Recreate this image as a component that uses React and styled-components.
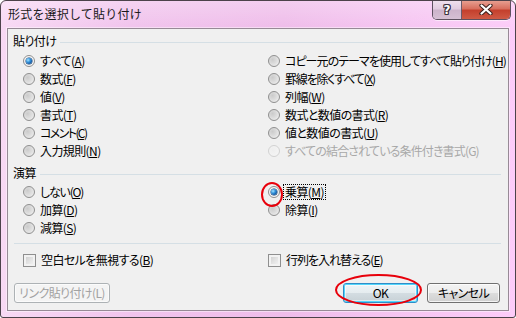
import React from "react";
import styled, { createGlobalStyle, css } from "styled-components";

const Global = createGlobalStyle`
  html, body { margin: 0; padding: 0; background: #ffffff; }
  body { font-family: "Noto Sans CJK JP", "Noto Sans", sans-serif; }
  #root { width: 516px; height: 318px; }
`;

const uiFont = css`
  font-family: "Noto Sans CJK JP", "Noto Sans", sans-serif;
  font-size: 12px;
  font-feature-settings: "palt" 1;
  font-kerning: normal;
  letter-spacing: -0.6px;
`;

const Window = styled.div`
  width: 516px;
  height: 318px;
  box-sizing: border-box;
  border: 1px solid #4c424a;
  border-radius: 6px 6px 3px 3px;
  background:
    linear-gradient(180deg, rgba(255, 255, 255, 0.25) 0px, rgba(255, 255, 255, 0) 26px),
    linear-gradient(90deg, #f8d9f4 0%, #f1c4ed 25%, #efbdea 55%, #f6c6f2 80%, #fcccf9 100%);
  display: flex;
  flex-direction: column;
  overflow: hidden;
`;

const TitleBar = styled.div`
  height: 27px;
  flex: none;
  display: flex;
  align-items: flex-start;
  justify-content: space-between;
  padding: 0 4px 0 7px;
`;

const Title = styled.div`
  font-family: "Noto Sans CJK JP", sans-serif;
  font-size: 12px;
  line-height: 16px;
  margin-top: 5px;
  color: #1a1a1a;
  letter-spacing: 0.2px;
`;

const Caption = styled.div`
  display: flex;
  margin-top: -1px;
  border: 1px solid #5e5160;
  border-top: none;
  border-radius: 0 0 5px 5px;
  overflow: hidden;
  box-shadow: 0 1px 0 rgba(255, 255, 255, 0.55);
`;

const CapButton = styled.div`
  height: 19px;
  width: ${(p) => p.$w}px;
  display: flex;
  align-items: center;
  justify-content: center;
  ${(p) =>
    p.$close
      ? css`
          background: linear-gradient(180deg, #e9a496 0%, #d8705f 45%, #c4402d 55%, #cf5a45 100%);
        `
      : css`
          border-right: 1px solid #6b5b6a;
          background: linear-gradient(180deg, #f1e2ef 0%, #e2cde0 45%, #cdb4cb 55%, #d6c0d4 100%);
        `}
`;

const HelpGlyph = styled.span`
  font-family: "DejaVu Sans", sans-serif;
  font-weight: bold;
  font-size: 12px;
  line-height: 12px;
  color: #ffffff;
  text-shadow: 1px 0 0 #3e3340, -1px 0 0 #3e3340, 0 1px 0 #3e3340, 0 -1px 0 #3e3340,
    1px 1px 0 #3e3340, -1px -1px 0 #3e3340, 1px -1px 0 #3e3340, -1px 1px 0 #3e3340;
  margin-top: 1px;
`;

const Client = styled.div`
  position: relative;
  flex: 1;
  margin: 0 6px 6px 6px;
  border: 1px solid #978a96;
  box-shadow: 0 0 0 1px rgba(255, 255, 255, 0.45);
  background: #f0f0f0;
  padding: 3px 7px 0 5px;
  display: flex;
  flex-direction: column;
  ${uiFont};
  color: #000;
`;

const GroupHeading = styled.div`
  display: flex;
  align-items: center;
  gap: 4px;
  height: 18px;
  margin-top: ${(p) => p.$mt || 0}px;
  margin-bottom: ${(p) => p.$mb || 0}px;
  line-height: 18px;
  &::after {
    content: "";
    flex: 1;
    height: 1px;
    margin-top: 3px;
    background: #d5dfe5;
  }
`;

const OptionGrid = styled.div`
  display: grid;
  grid-template-columns: 245px 1fr;
  grid-template-rows: repeat(${(p) => p.$rows}, 18px);
  grid-auto-flow: column;
  margin-left: 10px;
  margin-top: ${(p) => p.$mt || 0}px;
`;

const Option = styled.label`
  display: flex;
  align-items: center;
  gap: 4px;
  height: 18px;
  white-space: nowrap;
  color: ${(p) => (p.$disabled ? "#a8a8a8" : "#000")};
`;

const Radio = styled.span`
  position: relative;
  flex: none;
  width: 12px;
  height: 12px;
  box-sizing: border-box;
  border-radius: 50%;
  border: 1px solid ${(p) => (p.$disabled ? "#d2d2d2" : "#8f8f8f")};
  background: ${(p) =>
    p.$disabled
      ? "radial-gradient(circle at 40% 40%, #eeeeee 0%, #f6f6f6 100%)"
      : "radial-gradient(circle at 35% 35%, #cbcbcb 0%, #dcdcdc 45%, #f5f5f5 100%)"};
  ${(p) =>
    p.$checked &&
    css`
      background: #f6f6f6;
      &::after {
        content: "";
        position: absolute;
        left: 2px;
        top: 2px;
        width: 6px;
        height: 6px;
        border-radius: 50%;
        background: radial-gradient(circle at 35% 35%, #a8e4ff 0%, #3b9be0 35%, #1561ad 65%, #0b3a6e 100%);
        box-shadow: 0 0 0 0.5px #0b3a6e;
      }
    `}
`;

const Check = styled.span`
  flex: none;
  width: 13px;
  height: 13px;
  box-sizing: border-box;
  border: 1px solid #8f8f8f;
  background: linear-gradient(135deg, #c9c9c9 0%, #e2e2e2 50%, #f7f7f7 100%);
  box-shadow: inset 0 0 0 2px #f2f2f2;
`;

const Text = styled.span`
  padding: 0 1px;
  line-height: 14px;
  letter-spacing: ${(p) => (p.$ls != null ? p.$ls : -0.6)}px;
  ${(p) =>
    p.$focus &&
    css`
      outline: 1px dotted #000;
      outline-offset: 0;
    `}
`;

const Key = styled.span`
  text-decoration: ${(p) => (p.$plain ? "none" : "underline")};
  text-underline-offset: 1px;
`;

const Divider = styled.div`
  height: 1px;
  background: #d5dfe5;
  margin: 6px 0 0 1px;
`;

const ButtonBar = styled.div`
  display: flex;
  align-items: center;
  margin-top: 14px;
  padding: 0 1px;
  gap: 9px;
`;

const Spacer = styled.div`
  flex: 1;
`;

const Button = styled.button`
  ${uiFont};
  height: 20px;
  width: ${(p) => p.$w}px;
  box-sizing: border-box;
  padding: 0;
  color: #000;
  border: 1px solid #707070;
  border-radius: 3px;
  background: linear-gradient(180deg, #f3f3f3 0%, #ececec 50%, #dddddd 50%, #d0d0d0 100%);
  box-shadow: inset 0 0 0 1px rgba(255, 255, 255, 0.75);
  line-height: 16px;
  ${(p) =>
    p.$default &&
    css`
      border-color: #2f8dc8;
      box-shadow: inset 0 0 0 1px #53d6fb, inset 0 0 0 2px rgba(255, 255, 255, 0.5);
      background: linear-gradient(180deg, #eef4f7 0%, #e5ecef 50%, #d4dde2 50%, #c7d1d6 100%);
    `}
  &:disabled {
    border-color: #adb2b5;
    background: #f4f4f4;
    color: #a2a2a2;
    box-shadow: inset 0 0 0 1px #fbfbfb;
  }
`;

const Mark = styled.svg`
  position: absolute;
  left: ${(p) => p.$x}px;
  top: ${(p) => p.$y}px;
  overflow: visible;
  pointer-events: none;
`;

const pasteLeft = [
  { t: "すべて", k: "A", checked: true },
  { t: "数式", k: "F" },
  { t: "値", k: "V" },
  { t: "書式", k: "T" },
  { t: "コメント", k: "C", ls: -1.6 },
  { t: "入力規則", k: "N" },
];
const pasteRight = [
  { t: "コピー元のテーマを使用してすべて貼り付け", k: "H", ls: -0.95 },
  { t: "罫線を除くすべて", k: "X", ls: -1.2 },
  { t: "列幅", k: "W" },
  { t: "数式と数値の書式", k: "R" },
  { t: "値と数値の書式", k: "U" },
  { t: "すべての結合されている条件付き書式", k: "G", disabled: true, ls: -0.85 },
];
const ops = [
  { t: "しない", k: "O", ls: -1.2 },
  { t: "加算", k: "D" },
  { t: "減算", k: "S" },
  { t: "乗算", k: "M", checked: true, focus: true },
  { t: "除算", k: "I" },
];

function RadioOption({ t, k, checked, disabled, focus, ls }) {
  return (
    <Option $disabled={disabled}>
      <Radio $checked={checked} $disabled={disabled} />
      <Text $focus={focus} $ls={ls}>
        {t}(<Key $plain={disabled}>{k}</Key>)
      </Text>
    </Option>
  );
}

export default function App() {
  return (
    <>
      <Global />
      <Window>
        <TitleBar>
          <Title>形式を選択して貼り付け</Title>
          <Caption>
            <CapButton $w={28}>
              <HelpGlyph>?</HelpGlyph>
            </CapButton>
            <CapButton $w={48} $close>
              <svg width="14" height="11" viewBox="0 0 14 11">
                <path d="M2.5 1.5 L11.5 9.5 M11.5 1.5 L2.5 9.5" stroke="#3d211d" strokeWidth="4.2" strokeLinecap="round" />
                <path d="M2.5 1.5 L11.5 9.5 M11.5 1.5 L2.5 9.5" stroke="#ffffff" strokeWidth="2.2" strokeLinecap="round" />
              </svg>
            </CapButton>
          </Caption>
        </TitleBar>
        <Client>
          <GroupHeading $mb={2}>貼り付け</GroupHeading>
          <OptionGrid $rows={6}>
            {[...pasteLeft, ...pasteRight].map((o) => (
              <RadioOption key={o.k} {...o} />
            ))}
          </OptionGrid>
          <GroupHeading $mt={4} $mb={1}>演算</GroupHeading>
          <OptionGrid $rows={3}>
            {ops.map((o) => (
              <RadioOption key={o.k} {...o} />
            ))}
          </OptionGrid>
          <Divider />
          <OptionGrid $rows={1} $mt={7}>
            <Option>
              <Check />
              <Text>
                空白セルを無視する(<Key>B</Key>)
              </Text>
            </Option>
            <Option>
              <Check />
              <Text $ls={-1}>
                行列を入れ替える(<Key>E</Key>)
              </Text>
            </Option>
          </OptionGrid>
          <ButtonBar>
            <Button $w={96} disabled>
              リンク貼り付け(L)
            </Button>
            <Spacer />
            <Button $w={75} $default>
              OK
            </Button>
            <Button $w={73}>キャンセル</Button>
          </ButtonBar>
          <Mark $x={253} $y={153} width="22" height="25" viewBox="0 0 22 25">
            <ellipse cx="11" cy="12.5" rx="10" ry="11.5" fill="none" stroke="#e8000b" strokeWidth="2" />
          </Mark>
          <Mark $x={327} $y={245} width="87" height="32" viewBox="0 0 87 32">
            <ellipse cx="43.5" cy="16" rx="42.5" ry="15" fill="none" stroke="#e8000b" strokeWidth="2" />
          </Mark>
        </Client>
      </Window>
    </>
  );
}
